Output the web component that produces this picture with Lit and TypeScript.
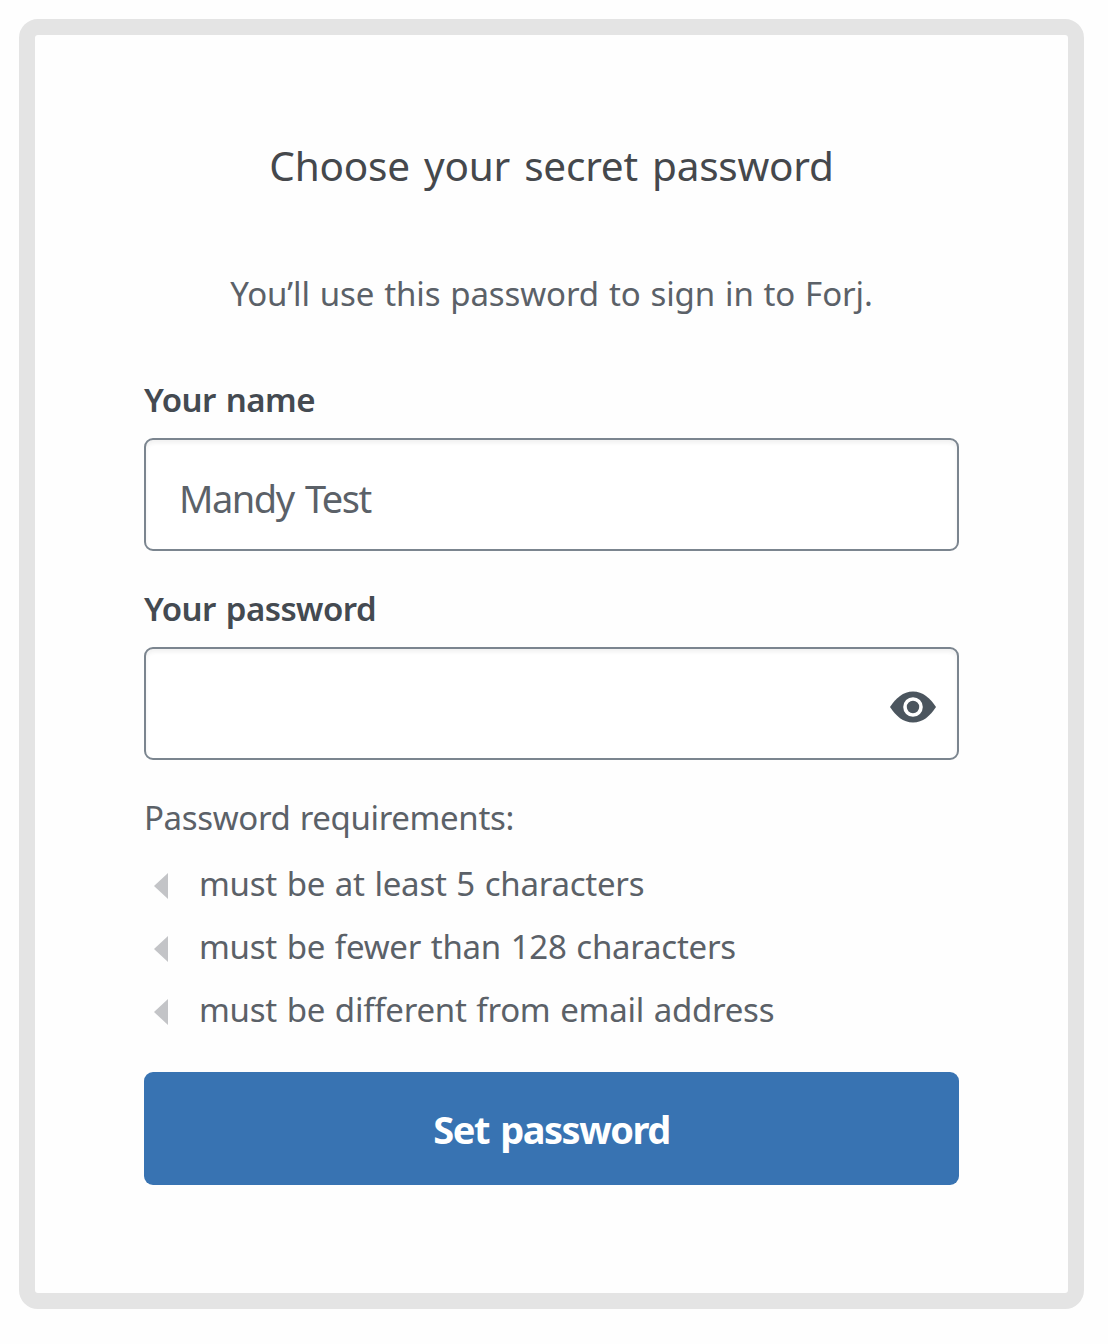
import { LitElement, html, css } from "lit";
import { customElement, state } from "lit/decorators.js";

@customElement("app-root")
export class AppRoot extends LitElement {
  @state() private requirements = [
    "must be at least 5 characters",
    "must be fewer than 128 characters",
    "must be different from email address",
  ];

  static styles = css`
    :host {
      display: block;
      box-sizing: border-box;
      height: 1344px;
      padding: 19px 24px 0 19px;
      background: #fefefe;
      font-family: "Noto Sans", "Open Sans", sans-serif;
      color: #5b6168;
    }
    * { box-sizing: border-box; }
    .card {
      height: 1290px;
      border: 16px solid #e4e4e4;
      border-radius: 19px;
      padding: 100px 109px 0;
      display: flex;
      flex-direction: column;
      white-space: nowrap;
    }
    h1 {
      margin: 0;
      height: 62px;
      line-height: 62px;
      font-size: 40.5px;
      font-weight: 400;
      letter-spacing: -0.25px;
      word-spacing: 4px;
      text-align: center;
      color: #45484c;
    }
    .intro {
      margin: 73px 0 0;
      height: 48px;
      line-height: 48px;
      font-size: 33px;
      letter-spacing: -0.1px;
      word-spacing: 1.4px;
      text-align: center;
    }
    .label {
      margin-top: 58px;
      height: 48px;
      line-height: 48px;
      font-size: 33px;
      font-weight: 600;
      letter-spacing: -0.55px;
      word-spacing: 2px;
      color: #444a51;
    }
    .label.second { margin-top: 34px; }
    .field {
      margin-top: 14px;
      height: 113px;
      border: 2px solid #7b858f;
      border-radius: 9px;
      background: #fff;
      box-shadow: inset 0 3px 4px rgba(0, 0, 0, 0.06);
      display: flex;
      align-items: center;
      padding: 6px 20px 0 33px;
      font-size: 38px;
      letter-spacing: -1.5px;
      word-spacing: 3px;
    }
    .eye {
      margin-left: auto;
      width: 48px;
      height: 34px;
      display: block;
    }
    .req {
      margin-top: 34px;
      height: 48px;
      line-height: 48px;
      font-size: 33px;
      letter-spacing: -0.35px;
      word-spacing: 1px;
    }
    ul {
      margin: 9px 0 0;
      padding: 0;
      list-style: none;
      font-size: 33px;
      letter-spacing: -0.25px;
      word-spacing: 1.4px;
    }
    li {
      height: 63px;
      padding-top: 2px;
      display: flex;
      align-items: center;
    }
    .mark {
      width: 14px;
      height: 26px;
      margin: 5px 31px 0 10px;
      flex: none;
    }
    button {
      margin: 32px 0 0;
      padding: 0;
      height: 113px;
      border: 0;
      border-radius: 9px;
      background: #3873b2;
      color: #fff;
      font: 700 38px "Noto Sans", "Open Sans", sans-serif;
      letter-spacing: -1.5px;
      word-spacing: 3px;
    }
  `;

  render() {
    return html`
      <main class="card">
        <h1>Choose your secret password</h1>
        <p class="intro">You’ll use this password to sign in to Forj.</p>
        <div class="label">Your name</div>
        <div class="field">Mandy Test</div>
        <div class="label second">Your password</div>
        <div class="field">
          <svg class="eye" viewBox="0 0 48 34">
            <path fill="#4b555e" d="M24 1.5C34 1.5 41 8 47 17C41 26 34 32.5 24 32.5S7 26 1 17C7 8 14 1.5 24 1.5Z" />
            <circle cx="24" cy="17" r="8" fill="#4b555e" stroke="#fff" stroke-width="3.6" />
          </svg>
        </div>
        <div class="req">Password requirements:</div>
        <ul>
          ${this.requirements.map(
            (text) => html`<li>
              <svg class="mark" viewBox="0 0 14 26"><path fill="#c3c4c7" d="M14 0V26L0 13Z" /></svg>
              <span>${text}</span>
            </li>`
          )}
        </ul>
        <button type="button">Set password</button>
      </main>
    `;
  }
}
